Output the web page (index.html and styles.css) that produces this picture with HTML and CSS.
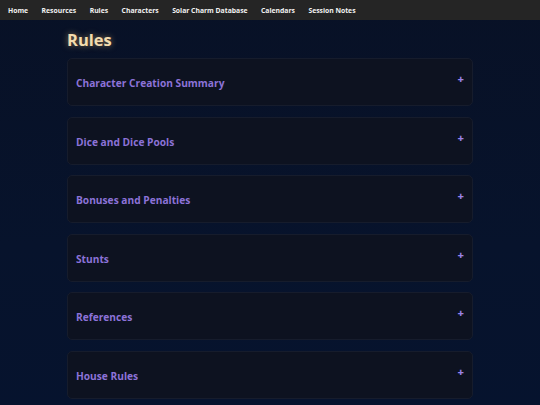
FILE: index.html
```html
<!DOCTYPE html>
<html lang="en">
<head>
    <meta charset="UTF-8">
    <meta name="viewport" content="width=device-width, initial-scale=1.0">
    <title>Rules</title>
    <link rel="stylesheet" href="styles.css">
</head>
<body>
    <nav class="topnav">
        <a href="#">Home</a>
        <a href="#">Resources</a>
        <a href="#">Rules</a>
        <a href="#">Characters</a>
        <a href="#">Solar Charm Database</a>
        <a href="#">Calendars</a>
        <a href="#">Session Notes</a>
    </nav>
    <main class="page">
        <h1>Rules</h1>
        <div class="panel">
            <div class="panel-head"><span class="panel-title">Character Creation Summary</span><span class="toggle">+</span></div>
        </div>
        <div class="panel">
            <div class="panel-head"><span class="panel-title">Dice and Dice Pools</span><span class="toggle">+</span></div>
        </div>
        <div class="panel">
            <div class="panel-head"><span class="panel-title">Bonuses and Penalties</span><span class="toggle">+</span></div>
        </div>
        <div class="panel">
            <div class="panel-head"><span class="panel-title">Stunts</span><span class="toggle">+</span></div>
        </div>
        <div class="panel">
            <div class="panel-head"><span class="panel-title">References</span><span class="toggle">+</span></div>
        </div>
        <div class="panel">
            <div class="panel-head"><span class="panel-title">House Rules</span><span class="toggle">+</span></div>
        </div>
    </main>
</body>
</html>
```

FILE: styles.css
```css
body {
    margin: 0;
    font-family: 'Open Sans', 'Noto Sans', sans-serif;
    background: linear-gradient(180deg, #081126 0%, #07132c 60%, #06132e 100%);
    min-height: 100vh;
    color: #ddd;
}
.topnav {
    display: flex;
    gap: 13.5px;
    height: 20px;
    align-items: center;
    padding: 0 8px;
    background: #252525;
}
.topnav a {
    color: #f2f2f2;
    text-decoration: none;
    font-size: 6.8px;
    font-weight: 700;
}
.page {
    width: 406px;
    margin: 0 auto;
}
h1 {
    margin: 9px 0 7px 0;
    font-size: 16.5px;
    line-height: 22px;
    color: #f3dcae;
    text-shadow: 0 0 6px rgba(240, 200, 120, 0.55);
}
.panel {
    height: 48px;
    box-sizing: border-box;
    margin-bottom: 10.6px;
    background: #0d1220;
    border: 1px solid #161c2c;
    border-radius: 5px;
}
.panel-head {
    display: flex;
    justify-content: space-between;
    align-items: flex-start;
    padding: 0 8px 0 8px;
}
.panel-title {
    margin-top: 16px;
    font-size: 10.2px;
    line-height: 16px;
    font-weight: 700;
    color: #8c72d8;
}
.toggle {
    margin-top: 14px;
    font-size: 11px;
    line-height: 12px;
    font-weight: 800;
    color: #9a82e6;
}
```
